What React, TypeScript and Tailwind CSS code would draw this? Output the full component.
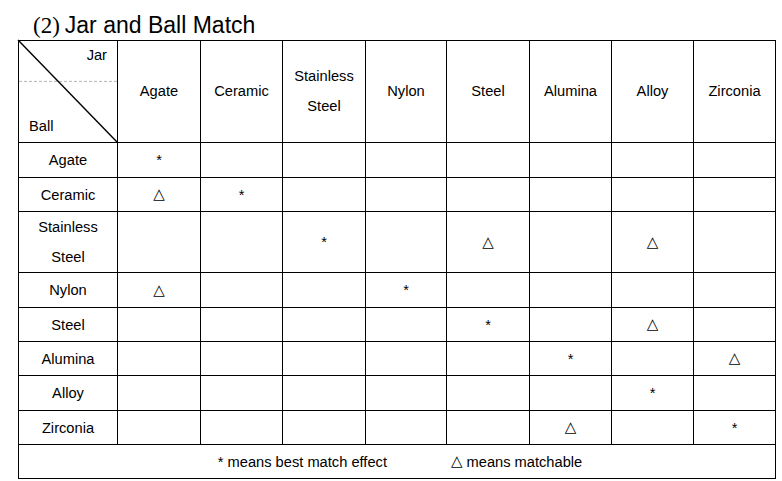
const materials = ["Agate", "Ceramic", "Stainless Steel", "Nylon", "Steel", "Alumina", "Alloy", "Zirconia"];

// rows = ball, columns = jar
const matrix: string[][] = [
  ["*", "", "", "", "", "", "", ""],
  ["△", "*", "", "", "", "", "", ""],
  ["", "", "*", "", "△", "", "△", ""],
  ["△", "", "", "*", "", "", "", ""],
  ["", "", "", "", "*", "", "△", ""],
  ["", "", "", "", "", "*", "", "△"],
  ["", "", "", "", "", "", "*", ""],
  ["", "", "", "", "", "△", "", "*"],
];

const cell = "border-r border-b border-black flex items-center justify-center text-center";

const Label = ({ name }: { name: string }) =>
  name === "Stainless Steel" ? (
    <div className="leading-[30px]">
      Stainless
      <br />
      Steel
    </div>
  ) : (
    <span>{name}</span>
  );

const Mark = ({ v }: { v: string }) => {
  if (v === "*") return <span>*</span>;
  if (v === "△") return <span className="font-['DejaVu_Sans',sans-serif] text-[15px] leading-none">△</span>;
  return null;
};

export default function App() {
  return (
    <div className="w-[782px] h-[481px] bg-white text-black font-['Liberation_Sans',Arial,sans-serif] text-[14.67px]">
      {/* Title */}
      <div className="h-[40px] pt-[12px] pl-[33px] leading-[26px] text-[23px] whitespace-nowrap">
        <span className="font-['Liberation_Serif',serif] mr-[5px]">(2)</span>
        Jar and Ball Match
      </div>

      {/* Table */}
      <div className="ml-[18px] w-[758px] border-l border-t border-black grid grid-cols-[99px_83px_82px_83px_81px_83px_82px_82px_82px] grid-rows-[102px_35px_34px_61px_35px_34px_34px_35px_34px_34px]">
        {/* Diagonal header cell */}
        <div className="relative border-r border-b border-black flex flex-col justify-between pt-[6px] pb-[7px] px-[10px] leading-[17px]">
          <svg className="absolute inset-0 w-full h-full overflow-visible" viewBox="0 0 100 100" preserveAspectRatio="none">
            <line x1="0" y1="40" x2="100" y2="40" stroke="#b5b5b5" strokeWidth="1" strokeDasharray="3 2" vectorEffect="non-scaling-stroke" />
            <line x1="-1" y1="-1" x2="100" y2="100" stroke="#000" strokeWidth="1.4" vectorEffect="non-scaling-stroke" />
          </svg>
          <span className="relative self-end">Jar</span>
          <span className="relative self-start">Ball</span>
        </div>
        {materials.map((m) => (
          <div key={"h" + m} className={cell + " pb-[2px]"}>
            <Label name={m} />
          </div>
        ))}

        {materials.map((ball, r) => (
          <>
            <div key={"r" + ball} className={cell}>
              <Label name={ball} />
            </div>
            {matrix[r].map((v, c) => (
              <div key={ball + c} className={cell}>
                <Mark v={v} />
              </div>
            ))}
          </>
        ))}

        {/* Legend */}
        <div className="col-span-9 border-r border-b border-black flex items-center justify-center gap-[64px] pl-[6px]">
          <span>* means best match effect</span>
          <span className="flex items-center">
            <span className="font-['DejaVu_Sans',sans-serif] text-[15px] leading-none mr-[4px]">△</span>
            means matchable
          </span>
        </div>
      </div>
    </div>
  );
}
